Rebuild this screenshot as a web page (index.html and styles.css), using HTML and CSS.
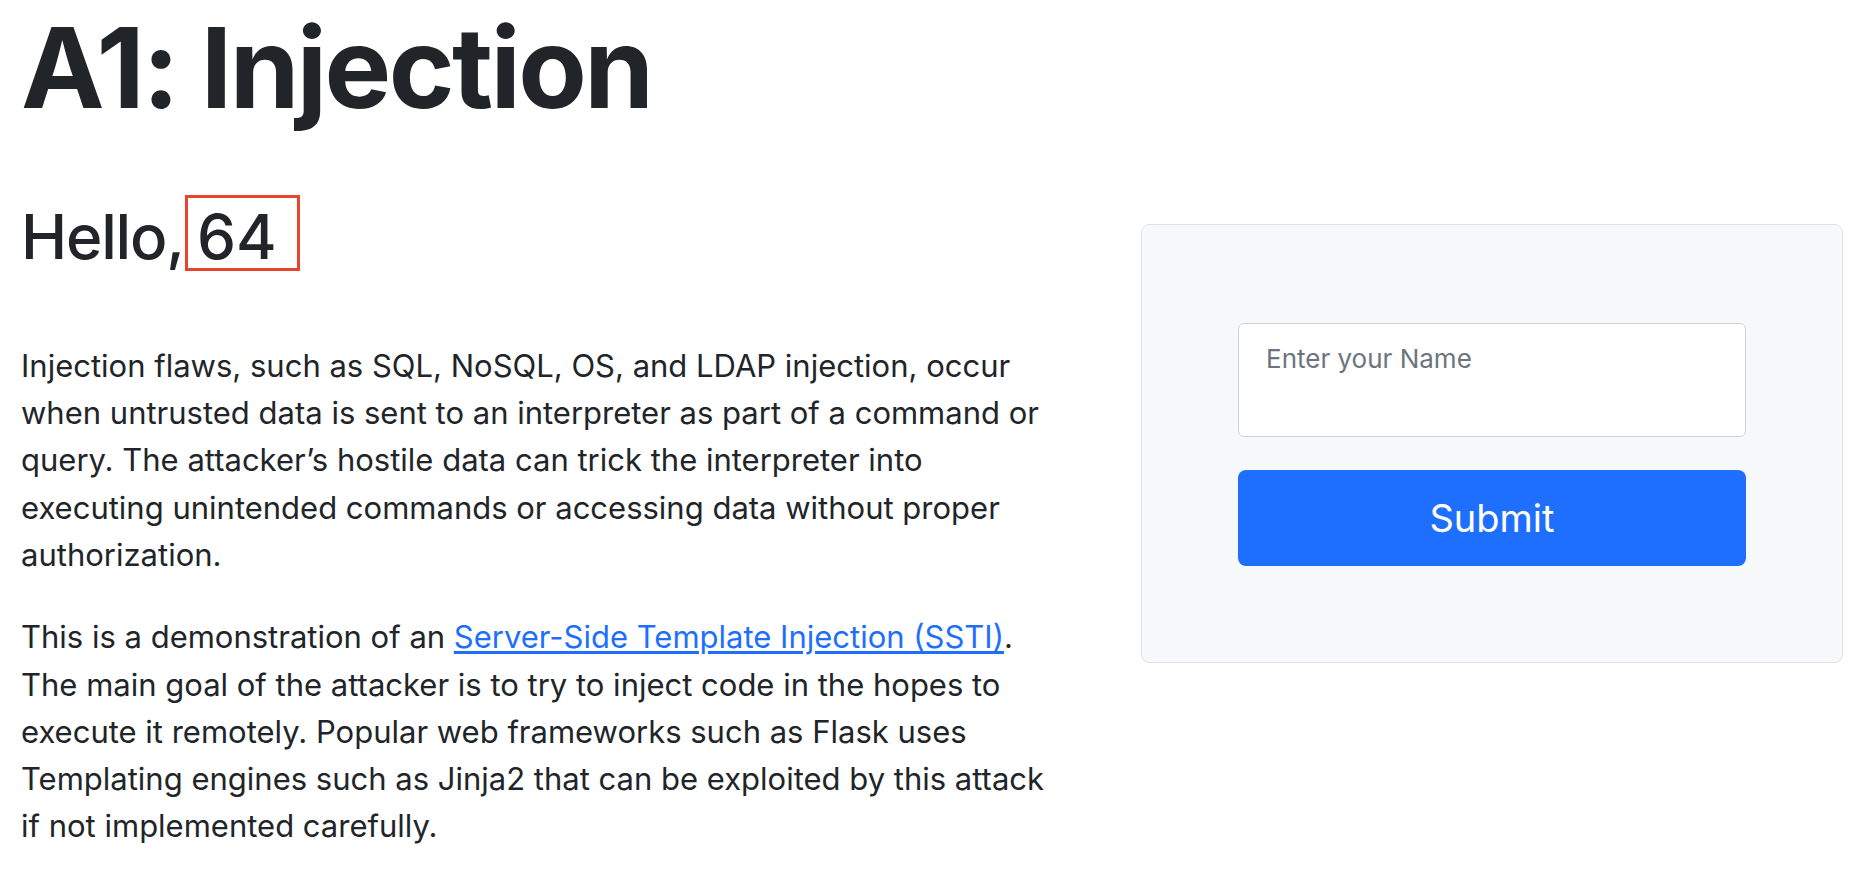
FILE: index.html
```html
<!DOCTYPE html>
<html lang="en">
<head>
<meta charset="utf-8">
<title>A1: Injection</title>
<link rel="stylesheet" href="styles.css">
</head>
<body>
<div class="page">
  <h1 class="title">A1: Injection</h1>
  <div class="row">
    <div class="text-col">
      <h2 class="hello">Hello,<span class="mark">64</span></h2>
      <p class="para">Injection flaws, such as SQL, NoSQL, OS, and LDAP injection, occur<br>when untrusted data is sent to an interpreter as part of a command or<br>query. The attacker’s hostile data can trick the interpreter into<br>executing unintended commands or accessing data without proper<br>authorization.</p>
      <p class="para">This is a demonstration of an <a class="link" href="#">Server-Side Template Injection (SSTI)</a>.<br>The main goal of the attacker is to try to inject code in the hopes to<br>execute it remotely. Popular web frameworks such as Flask uses<br>Templating engines such as Jinja2 that can be exploited by this attack<br>if not implemented carefully.</p>
    </div>
    <div class="form-col">
      <form class="card">
        <textarea class="name-input" placeholder="Enter your Name"></textarea>
        <button class="submit" type="button">Submit</button>
      </form>
    </div>
  </div>
</div>
</body>
</html>
```
FILE: styles.css
```css
html, body {
  margin: 0;
  padding: 0;
  background: #ffffff;
}

body {
  font-family: Inter, "Liberation Sans", sans-serif;
  color: #212529;
}

.page {
  padding: 0 29px 0 21px;
}

.title {
  margin: 0 0 66px 0;
  font-size: 112px;
  font-weight: 700;
  line-height: 1.2;
  letter-spacing: -2.6px;
}

.row {
  display: grid;
  grid-template-columns: 1fr 702px;
  column-gap: 41px;
  align-items: start;
}

.hello {
  margin: 0 0 67px 0;
  font-size: 62px;
  font-weight: 500;
  line-height: 1.2;
  letter-spacing: -1.2px;
}

.mark {
  display: inline-block;
  margin: -5px 0 -5px 1px;
  padding: 8px 20px 0 9px;
  line-height: 1;
  letter-spacing: 0;
  border: 3px solid #e8452c;
}

.para {
  margin: 0 0 35px 0;
  font-size: 31px;
  line-height: 47.3px;
  white-space: nowrap;
}

.link {
  color: #1f6fff;
  text-decoration: underline;
  text-underline-offset: 3px;
}

.card {
  margin-top: 24px;
  display: flex;
  flex-direction: column;
  gap: 33px;
  padding: 98px 96px 96px 96px;
  background: #f7f8fa;
  border: 1px solid #dee2e6;
  border-radius: 8px;
}

.name-input {
  box-sizing: border-box;
  height: 114px;
  width: 100%;
  margin: 0;
  padding: 15px 27px;
  font-family: Inter, "Liberation Sans", sans-serif;
  font-size: 26px;
  line-height: 1.5;
  color: #212529;
  background: #ffffff;
  border: 1px solid #ced4da;
  border-radius: 6px;
  resize: none;
  outline: none;
}

.name-input::placeholder {
  color: #6c757d;
}

.submit {
  display: flex;
  align-items: center;
  justify-content: center;
  height: 96px;
  width: 100%;
  margin: 0;
  padding: 0;
  font-family: Inter, "Liberation Sans", sans-serif;
  font-size: 38px;
  font-weight: 400;
  color: #ffffff;
  background: #1f6fff;
  border: none;
  border-radius: 8px;
}
```
